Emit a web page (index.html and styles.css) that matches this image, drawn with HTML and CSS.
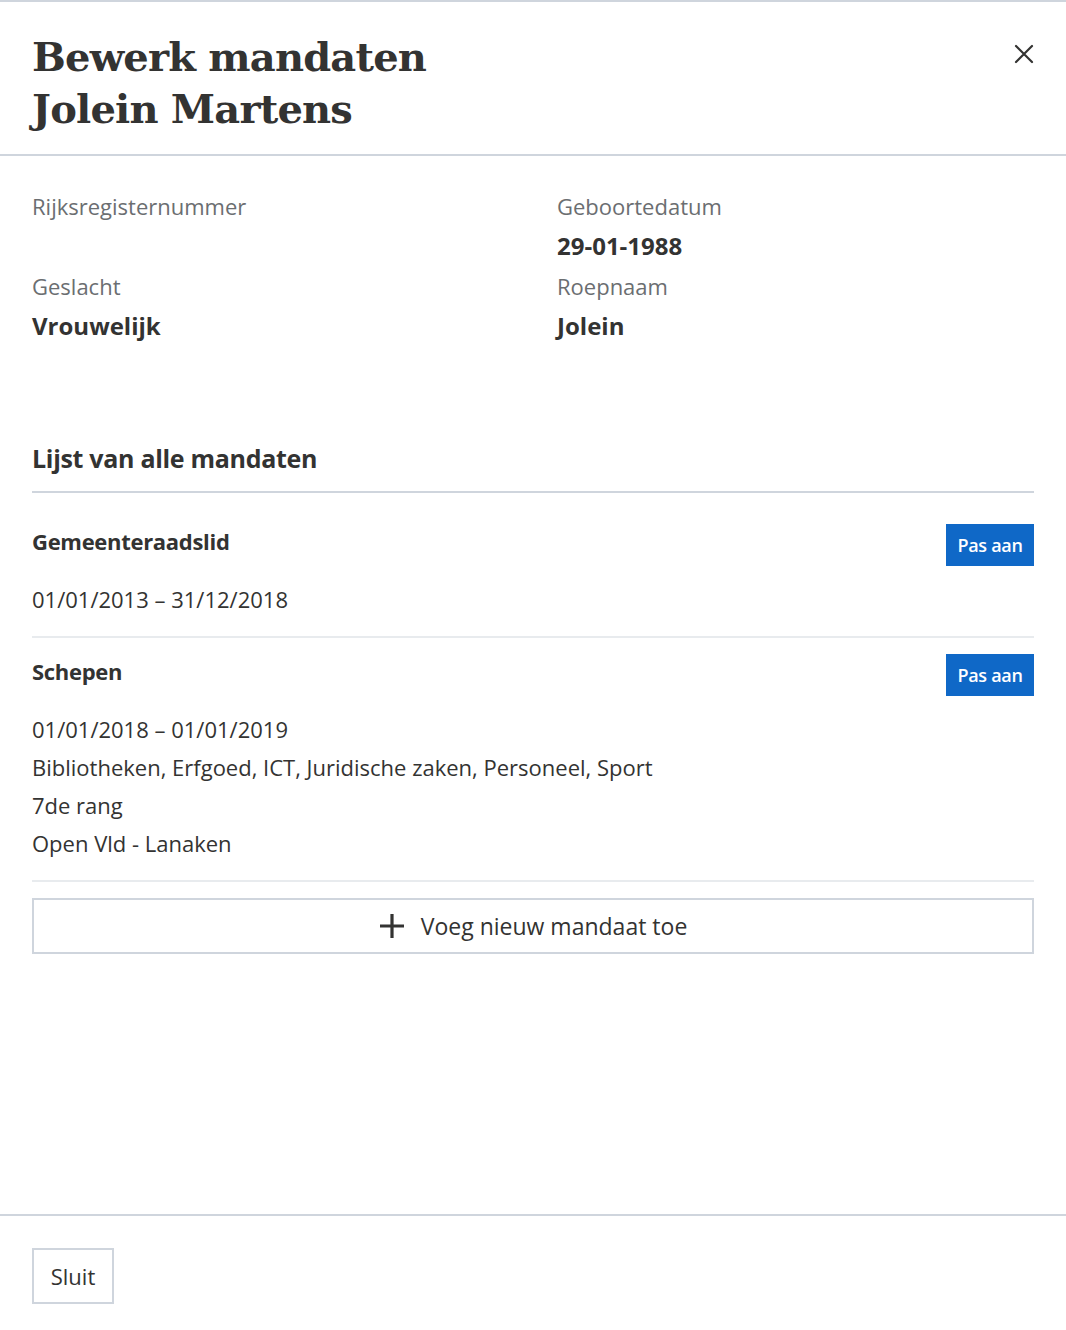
FILE: index.html
```html
<!DOCTYPE html>
<html lang="nl">
<head>
<meta charset="utf-8">
<title>Bewerk mandaten</title>
<link rel="stylesheet" href="styles.css">
</head>
<body>
<div class="modal">
  <header class="modal-header">
    <h1 class="modal-title">Bewerk mandaten<br>Jolein Martens</h1>
    <button class="close" aria-label="Sluit">
      <svg width="20" height="20" viewBox="0 0 20 20"><path d="M2 2 L18 18 M18 2 L2 18" stroke="#333332" stroke-width="2.2" stroke-linecap="round" fill="none"/></svg>
    </button>
  </header>
  <main class="modal-body">
    <div class="props">
      <div class="prop">
        <div class="prop-label">Rijksregisternummer</div>
        <div class="prop-value"></div>
      </div>
      <div class="prop">
        <div class="prop-label">Geboortedatum</div>
        <div class="prop-value">29-01-1988</div>
      </div>
      <div class="prop">
        <div class="prop-label">Geslacht</div>
        <div class="prop-value">Vrouwelijk</div>
      </div>
      <div class="prop">
        <div class="prop-label">Roepnaam</div>
        <div class="prop-value">Jolein</div>
      </div>
    </div>

    <h2 class="section-title">Lijst van alle mandaten</h2>
    <ul class="mandates">
      <li class="mandate">
        <div class="mandate-head">
          <h3 class="mandate-name">Gemeenteraadslid</h3>
          <button class="btn-primary">Pas aan</button>
        </div>
        <div class="mandate-lines">
          <p>01/01/2013 – 31/12/2018</p>
        </div>
      </li>
      <li class="mandate">
        <div class="mandate-head">
          <h3 class="mandate-name">Schepen</h3>
          <button class="btn-primary">Pas aan</button>
        </div>
        <div class="mandate-lines">
          <p>01/01/2018 – 01/01/2019</p>
          <p>Bibliotheken, Erfgoed, ICT, Juridische zaken, Personeel, Sport</p>
          <p>7de rang</p>
          <p>Open Vld - Lanaken</p>
        </div>
      </li>
    </ul>
    <button class="btn-add">
      <svg width="26" height="26" viewBox="0 0 26 26"><path d="M13 1 V25 M1 13 H25" stroke="#333332" stroke-width="3.2" fill="none"/></svg>
      <span>Voeg nieuw mandaat toe</span>
    </button>
  </main>
  <footer class="modal-footer">
    <button class="btn-secondary">Sluit</button>
  </footer>
</div>
</body>
</html>
```
FILE: styles.css
```css
* { box-sizing: border-box; }
html, body { margin: 0; padding: 0; }
body {
  font-family: "Open Sans", Lato, sans-serif;
  color: #333332;
  background: #fff;
}
.modal {
  height: 1330px;
  display: flex;
  flex-direction: column;
  border-top: 2px solid #cfd5dd;
}
.modal-header {
  display: flex;
  justify-content: space-between;
  align-items: flex-start;
  padding: 29px 32px 19px 32px;
  border-bottom: 2px solid #cfd5dd;
}
.modal-title {
  margin: 0;
  font-family: "DejaVu Serif", "Liberation Serif", serif;
  font-weight: bold;
  font-size: 40px;
  line-height: 52px;
  letter-spacing: -0.8px;
  color: #333332;
}
.close {
  background: none;
  border: 0;
  padding: 0;
  margin: 13px 0 0 0;
  width: 20px;
  height: 20px;
  cursor: pointer;
}
.modal-body {
  flex: 1;
  padding: 30px 32px 0 32px;
}
.props {
  display: grid;
  grid-template-columns: 525px 1fr;
}
.prop-label {
  font-size: 22px;
  line-height: 40px;
  color: #6b6e71;
}
.prop-value {
  font-size: 24px;
  line-height: 40px;
  font-weight: bold;
  min-height: 40px;
}
.section-title {
  margin: 94px 0 0 0;
  font-size: 25px;
  line-height: 36px;
  font-weight: bold;
  padding-bottom: 15px;
  border-bottom: 2px solid #cfd5dd;
  letter-spacing: -0.3px;
}
.mandates {
  list-style: none;
  margin: 0;
  padding: 0;
}
.mandate {
  padding: 31px 0 18px 0;
  border-bottom: 2px solid #e8ebee;
}
.mandate + .mandate { padding-top: 16px; }
.mandate-head {
  display: flex;
  justify-content: space-between;
  align-items: flex-start;
}
.mandate-name {
  margin: 0;
  font-size: 22px;
  line-height: 34px;
  font-weight: bold;
  letter-spacing: -0.3px;
}
.btn-primary {
  background: #0f68c7;
  color: #fff;
  border: 0;
  height: 42px;
  width: 88px;
  padding: 0;
  font-family: inherit;
  font-size: 18px;
  font-weight: 600;
  letter-spacing: -0.3px;
  cursor: pointer;
}
.mandate-lines {
  margin-top: 14px;
}
.mandate-lines p {
  margin: 0;
  font-size: 22px;
  line-height: 38px;
}
.btn-add {
  margin-top: 16px;
  width: 100%;
  height: 56px;
  background: #fff;
  border: 2px solid #cfd5dd;
  display: flex;
  align-items: center;
  justify-content: center;
  gap: 16px;
  font-family: inherit;
  font-size: 23px;
  color: #333332;
  cursor: pointer;
}
.modal-footer {
  border-top: 2px solid #cfd5dd;
  padding: 32px 32px 26px 32px;
}
.btn-secondary {
  height: 56px;
  width: 82px;
  background: #fff;
  border: 2px solid #cfd5dd;
  font-family: inherit;
  font-size: 22px;
  color: #333332;
  cursor: pointer;
}
```
